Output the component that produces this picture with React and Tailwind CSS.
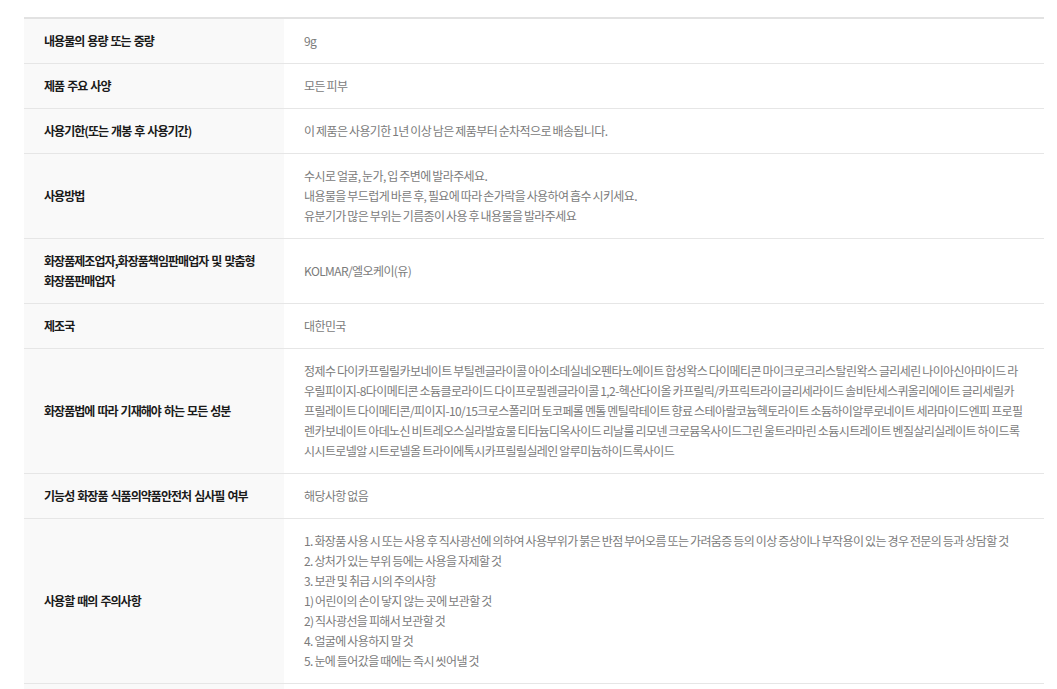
import React from "react";

const rows = [
  { label: ["내용물의 용량 또는 중량"], value: ["9g"] },
  { label: ["제품 주요 사양"], value: ["모든 피부"] },
  { label: ["사용기한(또는 개봉 후 사용기간)"], value: ["이 제품은 사용기한 1년 이상 남은 제품부터 순차적으로 배송됩니다."] },
  {
    label: ["사용방법"],
    value: [
      "수시로 얼굴, 눈가, 입 주변에 발라주세요.",
      "내용물을 부드럽게 바른 후, 필요에 따라 손가락을 사용하여 흡수 시키세요.",
      "유분기가 많은 부위는 기름종이 사용 후 내용물을 발라주세요",
    ],
  },
  { label: ["화장품제조업자,화장품책임판매업자 및 맞춤형", "화장품판매업자"], value: ["KOLMAR/엘오케이(유)"] },
  { label: ["제조국"], value: ["대한민국"] },
  {
    label: ["화장품법에 따라 기재해야 하는 모든 성분"],
    value: [
      "정제수 다이카프릴릴카보네이트 부틸렌글라이콜 아이소데실네오펜타노에이트 합성왁스 다이메티콘 마이크로크리스탈린왁스 글리세린 나이아신아마이드 라",
      "우릴피이지-8다이메티콘 소듐클로라이드 다이프로필렌글라이콜 1,2-헥산다이올 카프릴릭/카프릭트라이글리세라이드 솔비탄세스퀴올리에이트 글리세릴카",
      "프릴레이트 다이메티콘/피이지-10/15크로스폴리머 토코페롤 멘톨 멘틸락테이트 향료 스테아랄코늄헥토라이트 소듐하이알루로네이트 세라마이드엔피 프로필",
      "렌카보네이트 아데노신 비트레오스실라발효물 티타늄디옥사이드 리날룰 리모넨 크로뮴옥사이드그린 울트라마린 소듐시트레이트 벤질살리실레이트 하이드록",
      "시시트로넬알 시트로넬올 트라이에톡시카프릴릴실레인 알루미늄하이드록사이드",
    ],
  },
  { label: ["기능성 화장품 식품의약품안전처 심사필 여부"], value: ["해당사항 없음"] },
  {
    label: ["사용할 때의 주의사항"],
    value: [
      "1. 화장품 사용 시 또는 사용 후 직사광선에 의하여 사용부위가 붉은 반점 부어오름 또는 가려움증 등의 이상 증상이나 부작용이 있는 경우 전문의 등과 상담할 것",
      "2. 상처가 있는 부위 등에는 사용을 자제할 것",
      "3. 보관 및 취급 시의 주의사항",
      "1) 어린이의 손이 닿지 않는 곳에 보관할 것",
      "2) 직사광선을 피해서 보관할 것",
      "4. 얼굴에 사용하지 말 것",
      "5. 눈에 들어갔을 때에는 즉시 씻어낼 것",
    ],
  },
  { label: [" "], value: [" "] },
];

export default function App() {
  return (
    <div
      className="bg-white pt-[17px] pl-6 pr-[13px] h-[689px] overflow-hidden"
      style={{ fontFamily: '"Noto Sans CJK KR", "Noto Sans", sans-serif' }}
    >
      <div className="border-t-2 border-[#e2e2e2]">
        {rows.map((r, i) => (
          <div key={i} className="grid grid-cols-[260px_1fr] border-b border-[#e6e6e6]">
            <div className="bg-[#f9f9f9] flex items-center pl-5 pr-2 py-3 text-[12px] leading-5 font-bold text-[#1a1a1a] tracking-[-0.95px] [word-spacing:1.2px]">
              <div>
                {r.label.map((l, j) => (
                  <div key={j} className="whitespace-nowrap">{l}</div>
                ))}
              </div>
            </div>
            <div className="flex items-center pl-5 pr-2 py-3 text-[12px] leading-5 text-[#7b7b7b] tracking-[-0.6px] [word-spacing:-0.5px]">
              <div>
                {r.value.map((v, j) => (
                  <div key={j} className="whitespace-nowrap">{v}</div>
                ))}
              </div>
            </div>
          </div>
        ))}
      </div>
    </div>
  );
}
